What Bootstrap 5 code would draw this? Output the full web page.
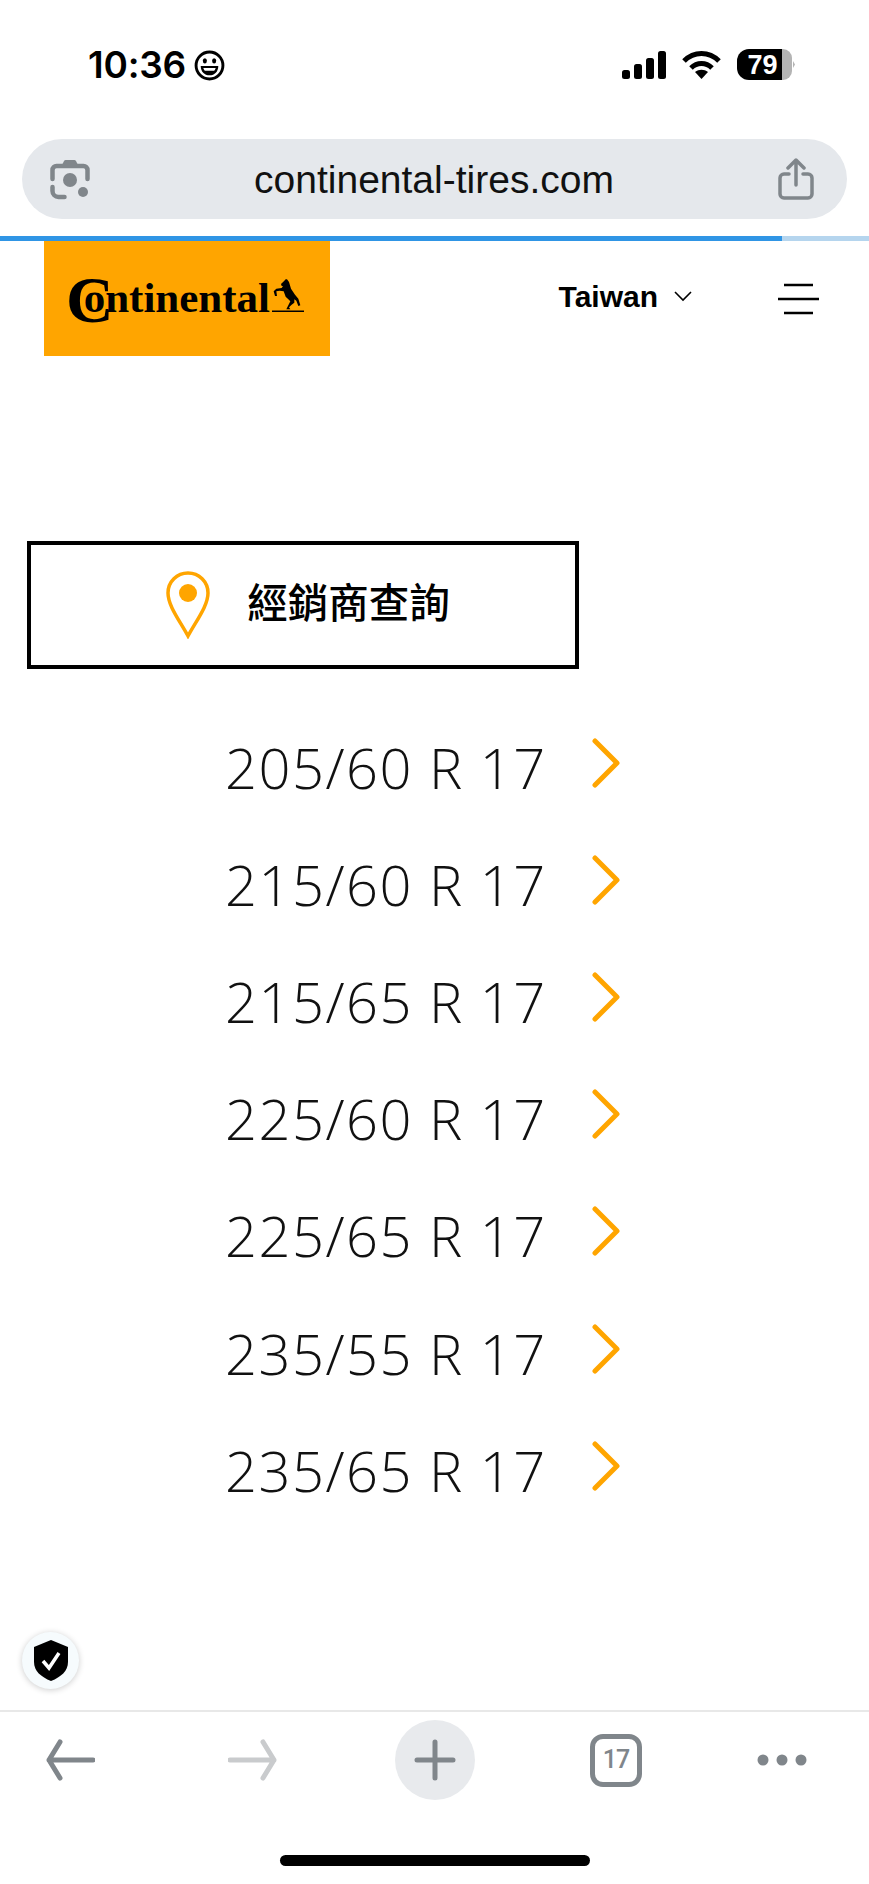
<!DOCTYPE html>
<html lang="zh-Hant">
<head>
  <meta charset="UTF-8">
  <meta name="viewport" content="width=device-width, initial-scale=1.0">
  <title>continental-tires.com</title>
  <link href="https://cdn.jsdelivr.net/npm/bootstrap@5.3.0/dist/css/bootstrap.min.css" rel="stylesheet">
  <style>
    body { width: 869px; height: 1884px; overflow: hidden; background: #fff; color: #000; font-family: "Liberation Sans", Arial, sans-serif; position: relative; }
    .status-row { height: 139px; padding: 47px 74px 0 88px; align-items: flex-start; }
    .status-right { margin-top: 2px; }
    .status-time { font-family: Inter, sans-serif; font-size: 37px; line-height: 36px; font-weight: 600; letter-spacing: -.2px; }
    .url-pill { height: 80px; margin: 0 22px; border-radius: 40px; background: #e5e8ec; padding: 0 33px 0 28px; }
    .url-text { font-family: "Liberation Sans", sans-serif; font-size: 39px; line-height: 1; color: #111; }
    .load-track { margin-top: 17px; height: 5px; background: #b5d5ee; }
    .load-fill { width: 782px; height: 5px; background: #2f95e5; }
    .site-head { height: 115px; padding-right: 50px; }
    .logo-box { width: 286px; height: 115px; margin-left: 44px; background: #ffa500; }
    .logo-word { font-family: "Liberation Serif", serif; font-weight: 700; }
    .lang-pick { font-size: 30px; font-weight: 700; font-family: "Liberation Sans", sans-serif; margin: 0 86px 4px 0; }
    .dealer-btn { width: 552px; height: 128px; margin: 185px 0 0 27px; padding: 0 0 0 10px; border: 4px solid #000; border-radius: 0; }
    .dealer-btn span { font-family: "Noto Sans CJK TC", sans-serif; font-size: 40.500px; font-weight: 500; line-height: 1; color: #000; margin: 0 0 8px 37px; }
    .size-list { margin-top: 39px; }
    .size-row { height: 117.2px; padding-left: 225px; text-decoration: none; color: #111; }
    .size-row span { width: 367px; font-family: "Open Sans", sans-serif; font-weight: 300; font-size: 56px; line-height: 1; letter-spacing: 1.5px; }
    .size-row svg { margin-bottom: 8px; }
    .shield-fab { position: absolute; left: 22px; top: 1632px; width: 57px; height: 57px; border-radius: 50%; background: #f6fbfd; box-shadow: 0 1px 6px rgba(0, 0, 0, .2); }
    .bottom-bar { position: absolute; left: 0; right: 0; top: 1710px; height: 174px; border-top: 2px solid #e8e8e8; }
    .tool-row { height: 80px; padding-left: 46px; margin-top: 8px; gap: 115px; }
    .fwd-icon { margin-left: 18px; }
    .plus-round { width: 80px; height: 80px; margin-left: 3px; border-radius: 50%; background: #e8eaed; }
    .tab-count { width: 52px; height: 53px; border: 5px solid #80868b; border-radius: 13px; color: #80868b; font-size: 25px; font-weight: 500; letter-spacing: -1px; font-family: Roboto, sans-serif; }
    .home-pill { width: 310px; height: 11px; border-radius: 6px; background: #000; margin: 55px auto 0; }
  </style>
</head>
<body>

<div class="status-row d-flex justify-content-between">
  <div class="d-flex align-items-center gap-2">
    <span class="status-time">10:36</span>
    <svg width="31" height="31" viewBox="0 0 30 30"><circle cx="15" cy="15" r="13" fill="none" stroke="#000" stroke-width="2.800"/><ellipse cx="10.500" cy="10.500" rx="2" ry="2.600"/><ellipse cx="19.500" cy="10.500" rx="2" ry="2.600"/><path d="M6.500 15.500h17c0 5.500-3.500 9-8.500 9s-8.500-3.500-8.500-9z"/><path d="M9 17.500h12c-.5 1.500-1 2-1.500 2.500h-9c-.5-.5-1-1-1.500-2.500z" fill="#fff"/></svg>
  </div>
  <div class="d-flex align-items-center status-right">
    <svg width="44" height="28" viewBox="0 0 44 28" class="me-3"><rect x="0" y="19" width="8" height="9" rx="2.500"/><rect x="12" y="13" width="8" height="15" rx="2.500"/><rect x="24" y="7" width="8" height="21" rx="2.500"/><rect x="36" y="0" width="8" height="28" rx="2.500"/></svg>
    <svg width="39" height="28" viewBox="0 0 39 28" class="me-3"><path d="M2 10c10-10 25-10 35 0" fill="none" stroke="#000" stroke-width="5"/><path d="M9 17c6-6 15-6 21 0" fill="none" stroke="#000" stroke-width="5"/><path d="M13 21c4-3 9-3 13 0l-6.500 7z"/></svg>
    <svg width="58" height="31" viewBox="0 0 58 31"><path d="M12 0h33v31H12a12 12 0 0 1-12-12v-7A12 12 0 0 1 12 0z"/><path d="M45 0h1a9 9 0 0 1 9 9v13a9 9 0 0 1-9 9h-1z" fill="#b4b4b4"/><path d="M56 12l2 3.500-2 3.500z" fill="#b4b4b4"/><text x="25.500" y="25" text-anchor="middle" font-family="Liberation Sans" font-weight="700" font-size="27" fill="#fff">79</text></svg>
  </div>
</div>

<div class="url-pill d-flex align-items-center justify-content-between">
  <svg width="40" height="42" viewBox="0 0 40 42" fill="none" stroke="#80868b" stroke-width="4.500" stroke-linecap="round"><path d="M2.500 21V12a4 4 0 0 1 4-4h27a4 4 0 0 1 4 4v9"/><path d="M12 7l2-4a2 2 0 0 1 2-1h8a2 2 0 0 1 2 1l2 4z" fill="#80868b" stroke="none"/><path d="M2.500 29v4a6 6 0 0 0 6 6h6"/><circle cx="20" cy="22" r="7" fill="#80868b" stroke="none"/><circle cx="33" cy="34" r="5" fill="#80868b" stroke="none"/></svg>
  <span class="url-text">continental-tires.com</span>
  <svg width="36" height="42" viewBox="0 0 36 42" fill="none" stroke="#80868b" stroke-width="3.500" stroke-linecap="round" stroke-linejoin="round"><path d="M18 27V3M10 10l8-8 8 8"/><path d="M11 16H6a4 4 0 0 0-4 4v16a4 4 0 0 0 4 4h24a4 4 0 0 0 4-4V20a4 4 0 0 0-4-4h-5"/></svg>
</div>

<div class="load-track"><div class="load-fill"></div></div>

<header class="site-head d-flex align-items-center">
  <div class="logo-box">
    <svg width="286" height="115" viewBox="0 0 286 115">
      <text class="logo-word" x="22" y="81" font-size="66">C<tspan dx="-30" dy="-10" font-size="43">ontinental</tspan></text>
      <g transform="translate(221 31) scale(.3333)"><path d="M66 22l6 8 6 20 12 18 10 12 6 20-6 2-6-16-6-4v10l-8 6-8 8 4 6H64l6-12 6-12-6-6-8-8-6-16-12-2-10 2 2 14h-6l-4-14 8-8 16-2 4-6h-4l-2-6 10-10 4-4z"/></g>
      <rect x="228" y="69.500" width="32" height="1.500"/>
    </svg>
  </div>
  <div class="ms-auto d-flex align-items-center lang-pick">
    <span>Taiwan</span>
    <svg width="18" height="11" viewBox="0 0 18 11" class="ms-3" fill="none" stroke="#000" stroke-width="1.600"><path d="M1 1l8 8 8-8"/></svg>
  </div>
  <svg width="41" height="32" viewBox="0 0 41 32" stroke="#000" stroke-width="2.500"><path d="M6 2h29M0 16h41M6 30h29"/></svg>
</header>

<a href="#" class="dealer-btn btn d-flex align-items-center justify-content-center">
  <svg width="44" height="68" viewBox="0 0 44 68" class="flex-shrink-0"><path d="M22 65C14 50 2 35 2 22a20 20 0 0 1 40 0c0 13-12 28-20 43z" fill="none" stroke="#ffa500" stroke-width="3.500"/><circle cx="22" cy="22" r="9" fill="#ffa500"/></svg>
  <span>經銷商查詢</span>
</a>

<div class="size-list">
  <a href="#" class="size-row d-flex align-items-center"><span>205/60 R 17</span><svg width="28" height="50" viewBox="0 0 28 50" fill="none" stroke="#ffa500" stroke-width="5" stroke-linecap="round" stroke-linejoin="round"><path d="M3 3l22 22L3 47"/></svg></a>
  <a href="#" class="size-row d-flex align-items-center"><span>215/60 R 17</span><svg width="28" height="50" viewBox="0 0 28 50" fill="none" stroke="#ffa500" stroke-width="5" stroke-linecap="round" stroke-linejoin="round"><path d="M3 3l22 22L3 47"/></svg></a>
  <a href="#" class="size-row d-flex align-items-center"><span>215/65 R 17</span><svg width="28" height="50" viewBox="0 0 28 50" fill="none" stroke="#ffa500" stroke-width="5" stroke-linecap="round" stroke-linejoin="round"><path d="M3 3l22 22L3 47"/></svg></a>
  <a href="#" class="size-row d-flex align-items-center"><span>225/60 R 17</span><svg width="28" height="50" viewBox="0 0 28 50" fill="none" stroke="#ffa500" stroke-width="5" stroke-linecap="round" stroke-linejoin="round"><path d="M3 3l22 22L3 47"/></svg></a>
  <a href="#" class="size-row d-flex align-items-center"><span>225/65 R 17</span><svg width="28" height="50" viewBox="0 0 28 50" fill="none" stroke="#ffa500" stroke-width="5" stroke-linecap="round" stroke-linejoin="round"><path d="M3 3l22 22L3 47"/></svg></a>
  <a href="#" class="size-row d-flex align-items-center"><span>235/55 R 17</span><svg width="28" height="50" viewBox="0 0 28 50" fill="none" stroke="#ffa500" stroke-width="5" stroke-linecap="round" stroke-linejoin="round"><path d="M3 3l22 22L3 47"/></svg></a>
  <a href="#" class="size-row d-flex align-items-center"><span>235/65 R 17</span><svg width="28" height="50" viewBox="0 0 28 50" fill="none" stroke="#ffa500" stroke-width="5" stroke-linecap="round" stroke-linejoin="round"><path d="M3 3l22 22L3 47"/></svg></a>
</div>

<div class="shield-fab d-flex align-items-center justify-content-center">
  <svg width="34" height="41" viewBox="0 0 34 41"><path d="M17 0l17 7v15c0 9-7 15-17 19C7 37 0 31 0 22V7z"/><path d="M9 21l6 7 10-15" fill="none" stroke="#fff" stroke-width="3.500"/></svg>
</div>

<div class="bottom-bar">
  <div class="tool-row d-flex align-items-center">
    <svg width="49" height="42" viewBox="0 0 49 42" fill="none" stroke="#80868b" stroke-width="5" stroke-linecap="round" stroke-linejoin="round"><path d="M47 21H3M14 3L3 21l11 18"/></svg>
    <svg class="fwd-icon" width="49" height="42" viewBox="0 0 49 42" fill="none" stroke="#c9cbcd" stroke-width="5" stroke-linecap="round" stroke-linejoin="round"><path d="M2 21h44M35 3l11 18-11 18"/></svg>
    <div class="plus-round d-flex align-items-center justify-content-center">
      <svg width="42" height="42" viewBox="0 0 42 42" stroke="#80868b" stroke-width="5" stroke-linecap="round"><path d="M21 3v36M3 21h36"/></svg>
    </div>
    <div class="tab-count d-flex align-items-center justify-content-center">17</div>
    <svg width="50" height="14" viewBox="0 0 50 14" fill="#80868b"><circle cx="6" cy="7" r="5.500"/><circle cx="25" cy="7" r="5.500"/><circle cx="44" cy="7" r="5.500"/></svg>
  </div>
  <div class="home-pill"></div>
</div>

<script src="https://cdn.jsdelivr.net/npm/bootstrap@5.3.0/dist/js/bootstrap.bundle.min.js"></script>
</body>
</html>
